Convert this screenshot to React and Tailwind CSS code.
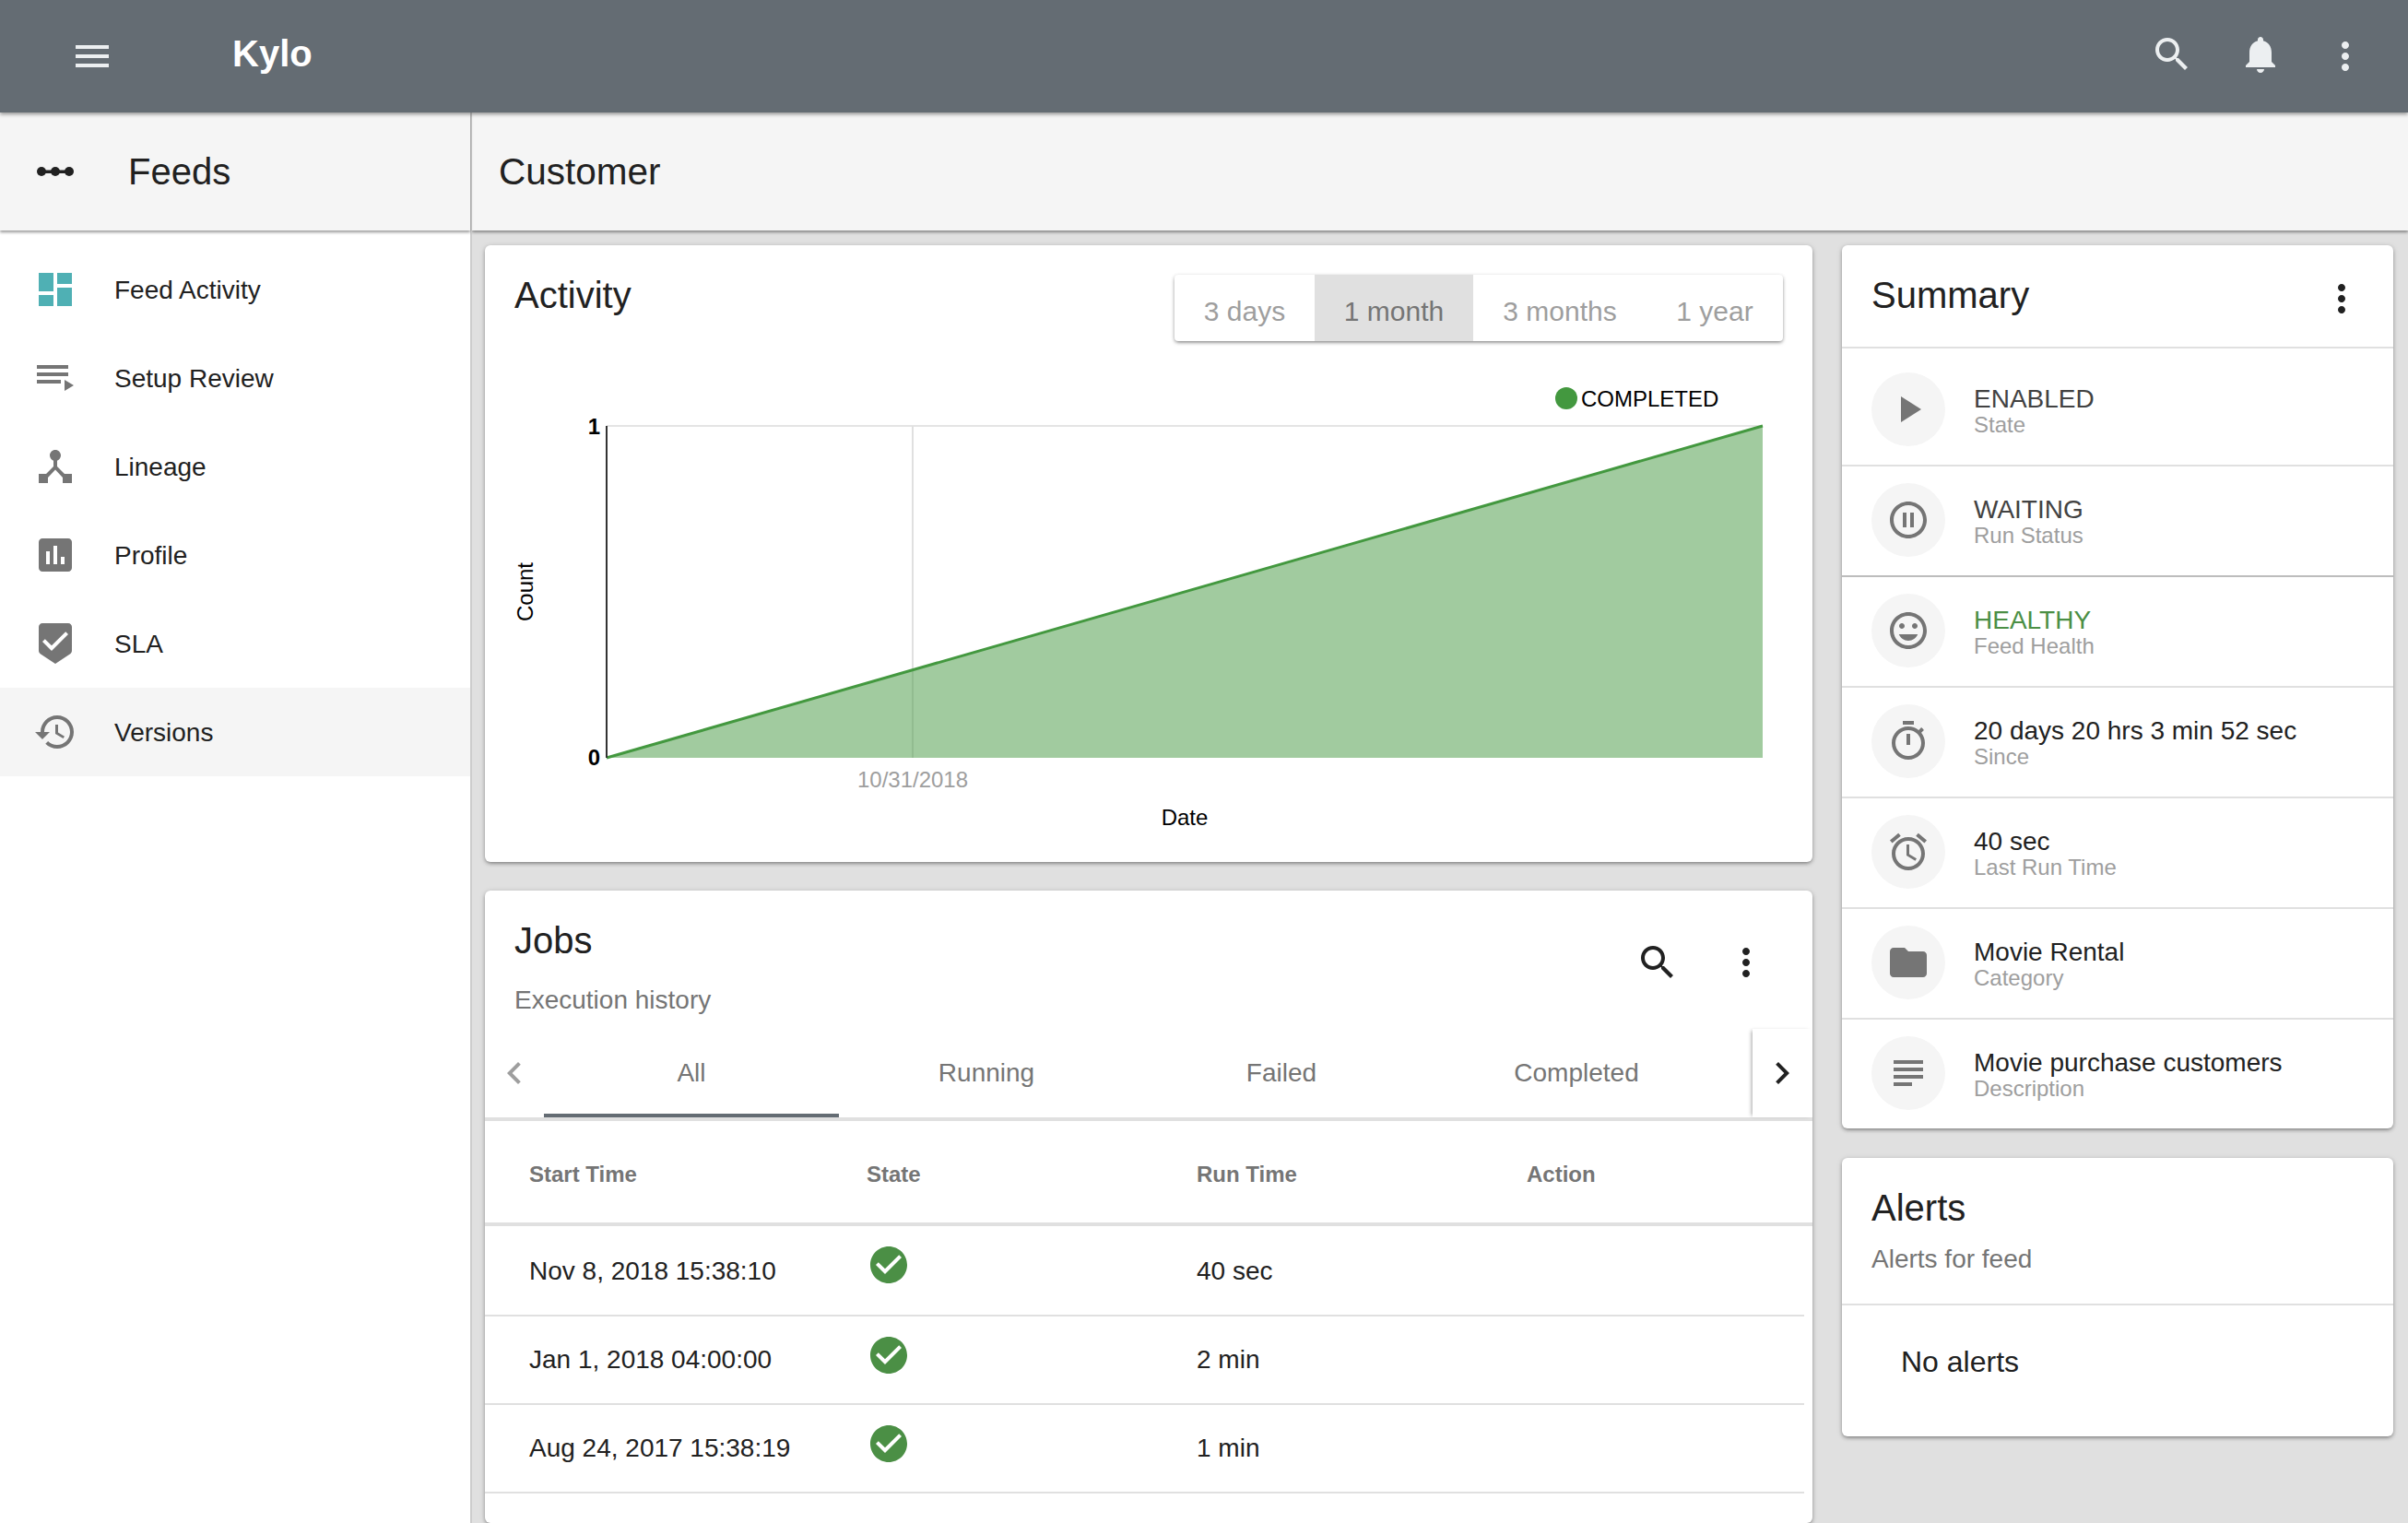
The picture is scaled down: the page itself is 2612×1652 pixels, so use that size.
const PATHS = {
    menu: 'M3 18h18v-2H3v2zm0-5h18v-2H3v2zm0-7v2h18V6H3z',
    search: 'M15.5 14h-.79l-.28-.27C15.41 12.59 16 11.11 16 9.5 16 5.91 13.09 3 9.5 3S3 5.91 3 9.5 5.91 16 9.5 16c1.61 0 3.09-.59 4.23-1.57l.27.28v.79l5 4.99L20.49 19l-4.99-5zm-6 0C7.01 14 5 11.99 5 9.5S7.01 5 9.5 5 14 7.01 14 9.5 11.99 14 9.5 14z',
    bell: 'M12 22c1.1 0 2-.9 2-2h-4c0 1.1.89 2 2 2zm6-6v-5c0-3.07-1.64-5.64-4.5-6.32V4c0-.83-.67-1.5-1.5-1.5s-1.5.67-1.5 1.5v.68C7.63 5.36 6 7.92 6 11v5l-2 2v1h16v-1l-2-2z',
    more: 'M12 8c1.1 0 2-.9 2-2s-.9-2-2-2-2 .9-2 2 .9 2 2 2zm0 2c-1.1 0-2 .9-2 2s.9 2 2 2 2-.9 2-2-.9-2-2-2zm0 6c-1.1 0-2 .9-2 2s.9 2 2 2 2-.9 2-2-.9-2-2-2z',
    dashboard: 'M3 13h8V3H3v10zm0 8h8v-6H3v6zm10 0h8V11h-8v10zm0-18v6h8V3h-8z',
    playlist: 'M19 9H2v2h17V9zm0-4H2v2h17V5zM2 15h13v-2H2v2zm15-2v6l5-3-5-3z',
    hub: 'M17 16l-4-4V8.82C14.16 8.4 15 7.3 15 6c0-1.66-1.34-3-3-3S9 4.34 9 6c0 1.3.84 2.4 2 2.82V12l-4 4H3v5h5v-3.05l4-4.2 4 4.2V21h5v-5h-4z',
    assessment: 'M19 3H5c-1.1 0-2 .9-2 2v14c0 1.1.9 2 2 2h14c1.1 0 2-.9 2-2V5c0-1.1-.9-2-2-2zM9 17H7v-7h2v7zm4 0h-2V7h2v10zm4 0h-2v-4h2v4z',
    beenhere: 'M19 1H5c-1.1 0-1.99.9-1.99 2L3 15.93c0 .69.35 1.3.88 1.66L12 23l8.11-5.41c.53-.36.88-.97.88-1.66L21 3c0-1.1-.9-2-2-2zm-9 15l-5-5 1.41-1.41L10 13.17l7.59-7.59L19 7l-9 9z',
    history: 'M13 3c-4.97 0-9 4.03-9 9H1l3.89 3.89.07.14L9 12H6c0-3.87 3.13-7 7-7s7 3.13 7 7-3.13 7-7 7c-1.93 0-3.68-.79-4.94-2.06l-1.42 1.42C8.27 19.99 10.51 21 13 21c4.97 0 9-4.03 9-9s-4.03-9-9-9zm-1 5v5l4.28 2.54.72-1.21-3.5-2.08V8H12z',
    play: 'M8 5v14l11-7z',
    pause: 'M9 16h2V8H9v8zm3-14C6.48 2 2 6.48 2 12s4.48 10 10 10 10-4.48 10-10S17.52 2 12 2zm0 18c-4.41 0-8-3.59-8-8s3.59-8 8-8 8 3.59 8 8-3.59 8-8 8zm1-4h2V8h-2v8z',
    mood: 'M11.99 2C6.47 2 2 6.48 2 12s4.47 10 9.99 10C17.52 22 22 17.52 22 12S17.52 2 11.99 2zM12 20c-4.42 0-8-3.58-8-8s3.58-8 8-8 8 3.58 8 8-3.58 8-8 8zm3.5-9c.83 0 1.5-.67 1.5-1.5S16.33 8 15.5 8 14 8.67 14 9.5s.67 1.5 1.5 1.5zm-7 0c.83 0 1.5-.67 1.5-1.5S9.33 8 8.5 8 7 8.67 7 9.5 7.67 11 8.5 11zm3.5 6.5c2.33 0 4.31-1.46 5.11-3.5H6.89c.8 2.04 2.78 3.5 5.11 3.5z',
    timer: 'M15 1H9v2h6V1zm-4 13h2V8h-2v6zm8.03-6.61l1.42-1.42c-.43-.51-.9-.99-1.41-1.41l-1.42 1.42C16.07 4.74 14.12 4 12 4c-4.97 0-9 4.03-9 9s4.02 9 9 9 9-4.03 9-9c0-2.12-.74-4.07-1.97-5.61zM12 20c-3.87 0-7-3.13-7-7s3.13-7 7-7 7 3.13 7 7-3.13 7-7 7z',
    alarm: 'M22 5.72l-4.6-3.86-1.29 1.53 4.6 3.86L22 5.72zM7.88 3.39L6.6 1.86 2 5.71l1.29 1.53 4.59-3.85zM12.5 8H11v6l4.75 2.85.75-1.23-4-2.37V8zM12 4c-4.97 0-9 4.03-9 9s4.02 9 9 9c4.97 0 9-4.03 9-9s-4.03-9-9-9zm0 16c-3.87 0-7-3.13-7-7s3.13-7 7-7 7 3.13 7 7-3.13 7-7 7z',
    folder: 'M10 4H4c-1.1 0-1.99.9-1.99 2L2 18c0 1.1.9 2 2 2h16c1.1 0 2-.9 2-2V8c0-1.1-.9-2-2-2h-8l-2-2z',
    subject: 'M14 17H4v2h10v-2zm6-8H4v2h16V9zM4 15h16v-2H4v2zM4 5v2h16V5H4z',
    check: 'M12 2C6.48 2 2 6.48 2 12s4.48 10 10 10 10-4.48 10-10S17.52 2 12 2zm-2 15l-5-5 1.41-1.41L10 14.17l7.59-7.59L19 8l-9 9z',
    left: 'M15.41 7.41L14 6l-6 6 6 6 1.41-1.41L10.83 12z',
    right: 'M10 6L8.59 7.41 13.17 12l-4.58 4.59L10 18l6-6z',
}

const NAV = [
    { label: 'Feed Activity', icon: 'dashboard', color: 'text-[#4fb0b4]' },
    { label: 'Setup Review', icon: 'playlist', color: 'text-[#757575]' },
    { label: 'Lineage', icon: 'hub', color: 'text-[#757575]' },
    { label: 'Profile', icon: 'assessment', color: 'text-[#757575]' },
    { label: 'SLA', icon: 'beenhere', color: 'text-[#757575]' },
    { label: 'Versions', icon: 'history', color: 'text-[#757575]', active: true },
]

const RANGES = [
    { label: '3 days', width: 'w-[152px]' },
    { label: '1 month', width: 'w-[172px]', active: true },
    { label: '3 months', width: 'w-[188px]' },
    { label: '1 year', width: 'w-[148px]' },
]

const SUMMARY = [
    { icon: 'play', title: 'ENABLED', sub: 'State', color: 'text-[#424242]', first: true },
    { icon: 'pause', title: 'WAITING', sub: 'Run Status', color: 'text-[#424242]' },
    { icon: 'mood', title: 'HEALTHY', sub: 'Feed Health', color: 'text-[#4b8f45]', dark: true },
    { icon: 'timer', title: '20 days 20 hrs 3 min 52 sec', sub: 'Since', color: 'text-[#212121]' },
    { icon: 'alarm', title: '40 sec', sub: 'Last Run Time', color: 'text-[#212121]' },
    { icon: 'folder', title: 'Movie Rental', sub: 'Category', color: 'text-[#212121]' },
    { icon: 'subject', title: 'Movie purchase customers', sub: 'Description', color: 'text-[#212121]' },
]

const JOBS = [
    { start: 'Nov 8, 2018 15:38:10', run: '40 sec', lift: 'mb-[14px]' },
    { start: 'Jan 1, 2018 04:00:00', run: '2 min', lift: 'mb-[10px]' },
    { start: 'Aug 24, 2017 15:38:19', run: '1 min', lift: 'mb-[10px]' },
]

const CARD = 'bg-white rounded-[6px] shadow-[0_2px_4px_-1px_rgba(0,0,0,0.45),0_1px_6px_rgba(0,0,0,0.14)]'
const COLS = 'grid grid-cols-[366px_358px_358px_1fr] pl-[48px] items-center'

function Icon({ name, className = '' }) {
    return (
        <svg viewBox="0 0 24 24" fill="currentColor" className={`w-12 h-12 shrink-0 ${className}`}>
            <path d={PATHS[name]} />
        </svg>
    )
}

function Chart() {
    // svg origin sits at the card's left edge, just under the header row
    return (
        <svg width="1440" height="565" viewBox="526 370 1440 565" className="block">
            <line x1="658" y1="462" x2="1912" y2="462" stroke="#e4e4e4" strokeWidth="2" />
            <line x1="990" y1="462" x2="990" y2="822" stroke="#e0e0e0" strokeWidth="2" />
            <polygon points="658,822 1912,462 1912,822" fill="#43983f" fillOpacity="0.5" />
            <line x1="658" y1="822" x2="1912" y2="462" stroke="#43983f" strokeWidth="3" />
            <line x1="658" y1="462" x2="658" y2="822" stroke="#333333" strokeWidth="2" />
            <circle cx="1699" cy="432" r="12" fill="#43983f" />
            <text x="1715" y="432" dominantBaseline="central" fontSize="24" fill="#000">COMPLETED</text>
            <text x="651" y="462" dominantBaseline="central" textAnchor="end" fontSize="24" fontWeight="700" fill="#000">1</text>
            <text x="651" y="821" dominantBaseline="central" textAnchor="end" fontSize="24" fontWeight="700" fill="#000">0</text>
            <text x="990" y="845" dominantBaseline="central" textAnchor="middle" fontSize="24" fill="#9e9e9e">10/31/2018</text>
            <text x="1285" y="886" dominantBaseline="central" textAnchor="middle" fontSize="24" fill="#000">Date</text>
            <text x="569" y="642" dominantBaseline="central" textAnchor="middle" fontSize="24" fill="#000" transform="rotate(-90 569 642)">Count</text>
        </svg>
    )
}

function ActivityCard() {
    return (
        <section className={`${CARD} h-[669px] shrink-0`}>
            <div className="h-[104px] flex items-start justify-between pl-[32px] pr-[32px] pt-[32px]">
                <h2 className="-mt-[2px] text-[40px] leading-[48px] text-[#212121]">Activity</h2>
                <div className="flex h-[72px] bg-white rounded-[4px] overflow-hidden shadow-[0_2px_4px_-1px_rgba(0,0,0,0.5),0_1px_4px_rgba(0,0,0,0.12)]">
                    {RANGES.map(r => (
                        <div key={r.label} className={`${r.width} flex items-center justify-center pt-[7px] text-[30px] ${r.active ? 'bg-[#e0e0e0] text-[#757575]' : 'text-[#9e9e9e]'}`}>
                            {r.label}
                        </div>
                    ))}
                </div>
            </div>
            <Chart />
        </section>
    )
}

function JobsCard() {
    return (
        <section className={`${CARD} flex-1 overflow-hidden`}>
            <div className="flex justify-between pl-[32px] pr-[48px] pt-[30px]">
                <div>
                    <h2 className="text-[40px] leading-[48px] text-[#212121]">Jobs</h2>
                    <p className="mt-[23px] text-[28px] leading-[36px] text-[#757575]">Execution history</p>
                </div>
                <div className="flex gap-12 mt-[24px] h-12 text-[#212121]">
                    <Icon name="search" />
                    <Icon name="more" />
                </div>
            </div>
            <div className="mt-[13px] h-[100px] flex border-b-4 border-[#e0e0e0]">
                <div className="w-[64px] flex items-center pl-[8px] text-[#9e9e9e]">
                    <Icon name="left" />
                </div>
                {['All', 'Running', 'Failed', 'Completed'].map((t, i) => (
                    <div key={t} className={`w-[320px] flex items-center justify-center text-[28px] text-[#757575] ${i === 0 ? 'pt-[4px] border-b-4 border-[#646c73]' : ''}`}>
                        {t}
                    </div>
                ))}
                <div className="w-[31px]" />
                <div className="flex-1 flex items-center pl-[8px] bg-white text-[#212121] shadow-[-3px_0_4px_-2px_rgba(0,0,0,0.35)]">
                    <Icon name="right" />
                </div>
            </div>
            <div className={`${COLS} h-[114px] pt-[6px] border-b-4 border-[#e0e0e0] text-[24px] font-bold text-[#757575]`}>
                <span>Start Time</span>
                <span>State</span>
                <span>Run Time</span>
                <span>Action</span>
            </div>
            <div className="w-[1431px] pt-[2px]">
                {JOBS.map(j => (
                    <div key={j.start} className={`${COLS} h-[96px] border-b-2 border-[#e0e0e0] text-[28px] text-[#212121]`}>
                        <span>{j.start}</span>
                        <span><Icon name="check" className={`text-[#4b8f45] ${j.lift}`} /></span>
                        <span>{j.run}</span>
                        <span />
                    </div>
                ))}
            </div>
        </section>
    )
}

function SummaryCard() {
    return (
        <section className={CARD}>
            <div className="h-[110px] flex justify-between pl-[32px] pr-[32px]">
                <h2 className="mt-[30px] text-[40px] leading-[48px] text-[#212121]">Summary</h2>
                <Icon name="more" className="mt-[34px] text-[#212121]" />
            </div>
            {SUMMARY.map(s => (
                <div key={s.sub} className={`flex items-center gap-[31px] pl-[32px] pb-5 border-t-2 ${s.first ? 'pt-[26px]' : 'pt-[18px]'} ${s.dark ? 'border-[#bdbdbd]' : 'border-[#e0e0e0]'}`}>
                    <div className="w-20 h-20 rounded-full bg-[#f5f5f5] flex items-center justify-center text-[#757575]">
                        <Icon name={s.icon} />
                    </div>
                    <div className="mt-[5px]">
                        <div className={`text-[28px] leading-[30px] ${s.color}`}>{s.title}</div>
                        <div className="-mt-[2px] text-[24px] leading-[30px] text-[#9e9e9e]">{s.sub}</div>
                    </div>
                </div>
            ))}
        </section>
    )
}

function AlertsCard() {
    return (
        <section className={CARD}>
            <div className="pl-[32px] pt-[30px] pb-[30px] border-b-2 border-[#e0e0e0]">
                <h2 className="text-[40px] leading-[48px] text-[#212121]">Alerts</h2>
                <p className="mt-[14px] text-[28px] leading-[36px] text-[#757575]">Alerts for feed</p>
            </div>
            <div className="pl-[64px] pt-[41px] pb-[61px] text-[32px] leading-[40px] text-[#212121]">No alerts</div>
        </section>
    )
}

export default function App() {
    return (
        <div className="h-screen overflow-hidden flex flex-col bg-[#e0e0e0] font-['Liberation_Sans',Arial,sans-serif]">
            {/* Top bar */}
            <header className="relative z-20 h-[122px] shrink-0 flex items-center bg-[#646c73] text-[#eceff1] shadow-[0_2px_4px_rgba(0,0,0,0.4)]">
                <Icon name="menu" className="ml-[76px]" />
                <span className="ml-[128px] mb-[6px] text-[40px] font-bold text-white">Kylo</span>
                <div className="ml-auto mr-[44px] flex items-center -mt-[4px]">
                    <Icon name="search" />
                    <Icon name="bell" className="ml-12" />
                    <Icon name="more" className="ml-[44px] mt-[4px]" />
                </div>
            </header>
            <div className="flex-1 flex min-h-0">
                {/* Side nav */}
                <aside className="relative z-10 w-[512px] shrink-0 flex flex-col bg-white border-r-2 border-[#cdcdcd]">
                    <div className="h-[128px] shrink-0 flex items-center pl-[36px] bg-[#f5f5f5] shadow-[0_2px_3px_rgba(0,0,0,0.4)]">
                        <svg viewBox="0 0 48 48" className="w-12 h-12 shrink-0 text-[#212121]" fill="currentColor">
                            <rect x="6" y="22.5" width="36" height="3.5" />
                            <circle cx="9" cy="24" r="5" />
                            <circle cx="24" cy="24" r="5" />
                            <circle cx="39" cy="24" r="5" />
                        </svg>
                        <span className="ml-[55px] text-[40px] text-[#212121]">Feeds</span>
                    </div>
                    <nav className="pt-[16px]">
                        {NAV.map(n => (
                            <div key={n.label} className={`h-[96px] flex items-center pl-[36px] ${n.active ? 'bg-[#f5f5f5]' : ''}`}>
                                <Icon name={n.icon} className={n.color} />
                                <span className="ml-[40px] mt-[2px] text-[28px] text-[#212121]">{n.label}</span>
                            </div>
                        ))}
                    </nav>
                </aside>
                <div className="flex-1 flex flex-col min-w-0">
                    <div className="relative h-[128px] shrink-0 flex items-center pl-[29px] bg-[#f5f5f5] shadow-[0_2px_3px_rgba(0,0,0,0.4)]">
                        <span className="text-[40.5px] text-[#212121]">Customer</span>
                    </div>
                    <main className="flex-1 min-h-0 flex gap-8 pl-[14px] pt-4">
                        <div className="w-[1440px] shrink-0 flex flex-col gap-[31px]">
                            <ActivityCard />
                            <JobsCard />
                        </div>
                        <div className="w-[598px] shrink-0 flex flex-col gap-8 items-stretch">
                            <SummaryCard />
                            <AlertsCard />
                        </div>
                    </main>
                </div>
            </div>
        </div>
    )
}
